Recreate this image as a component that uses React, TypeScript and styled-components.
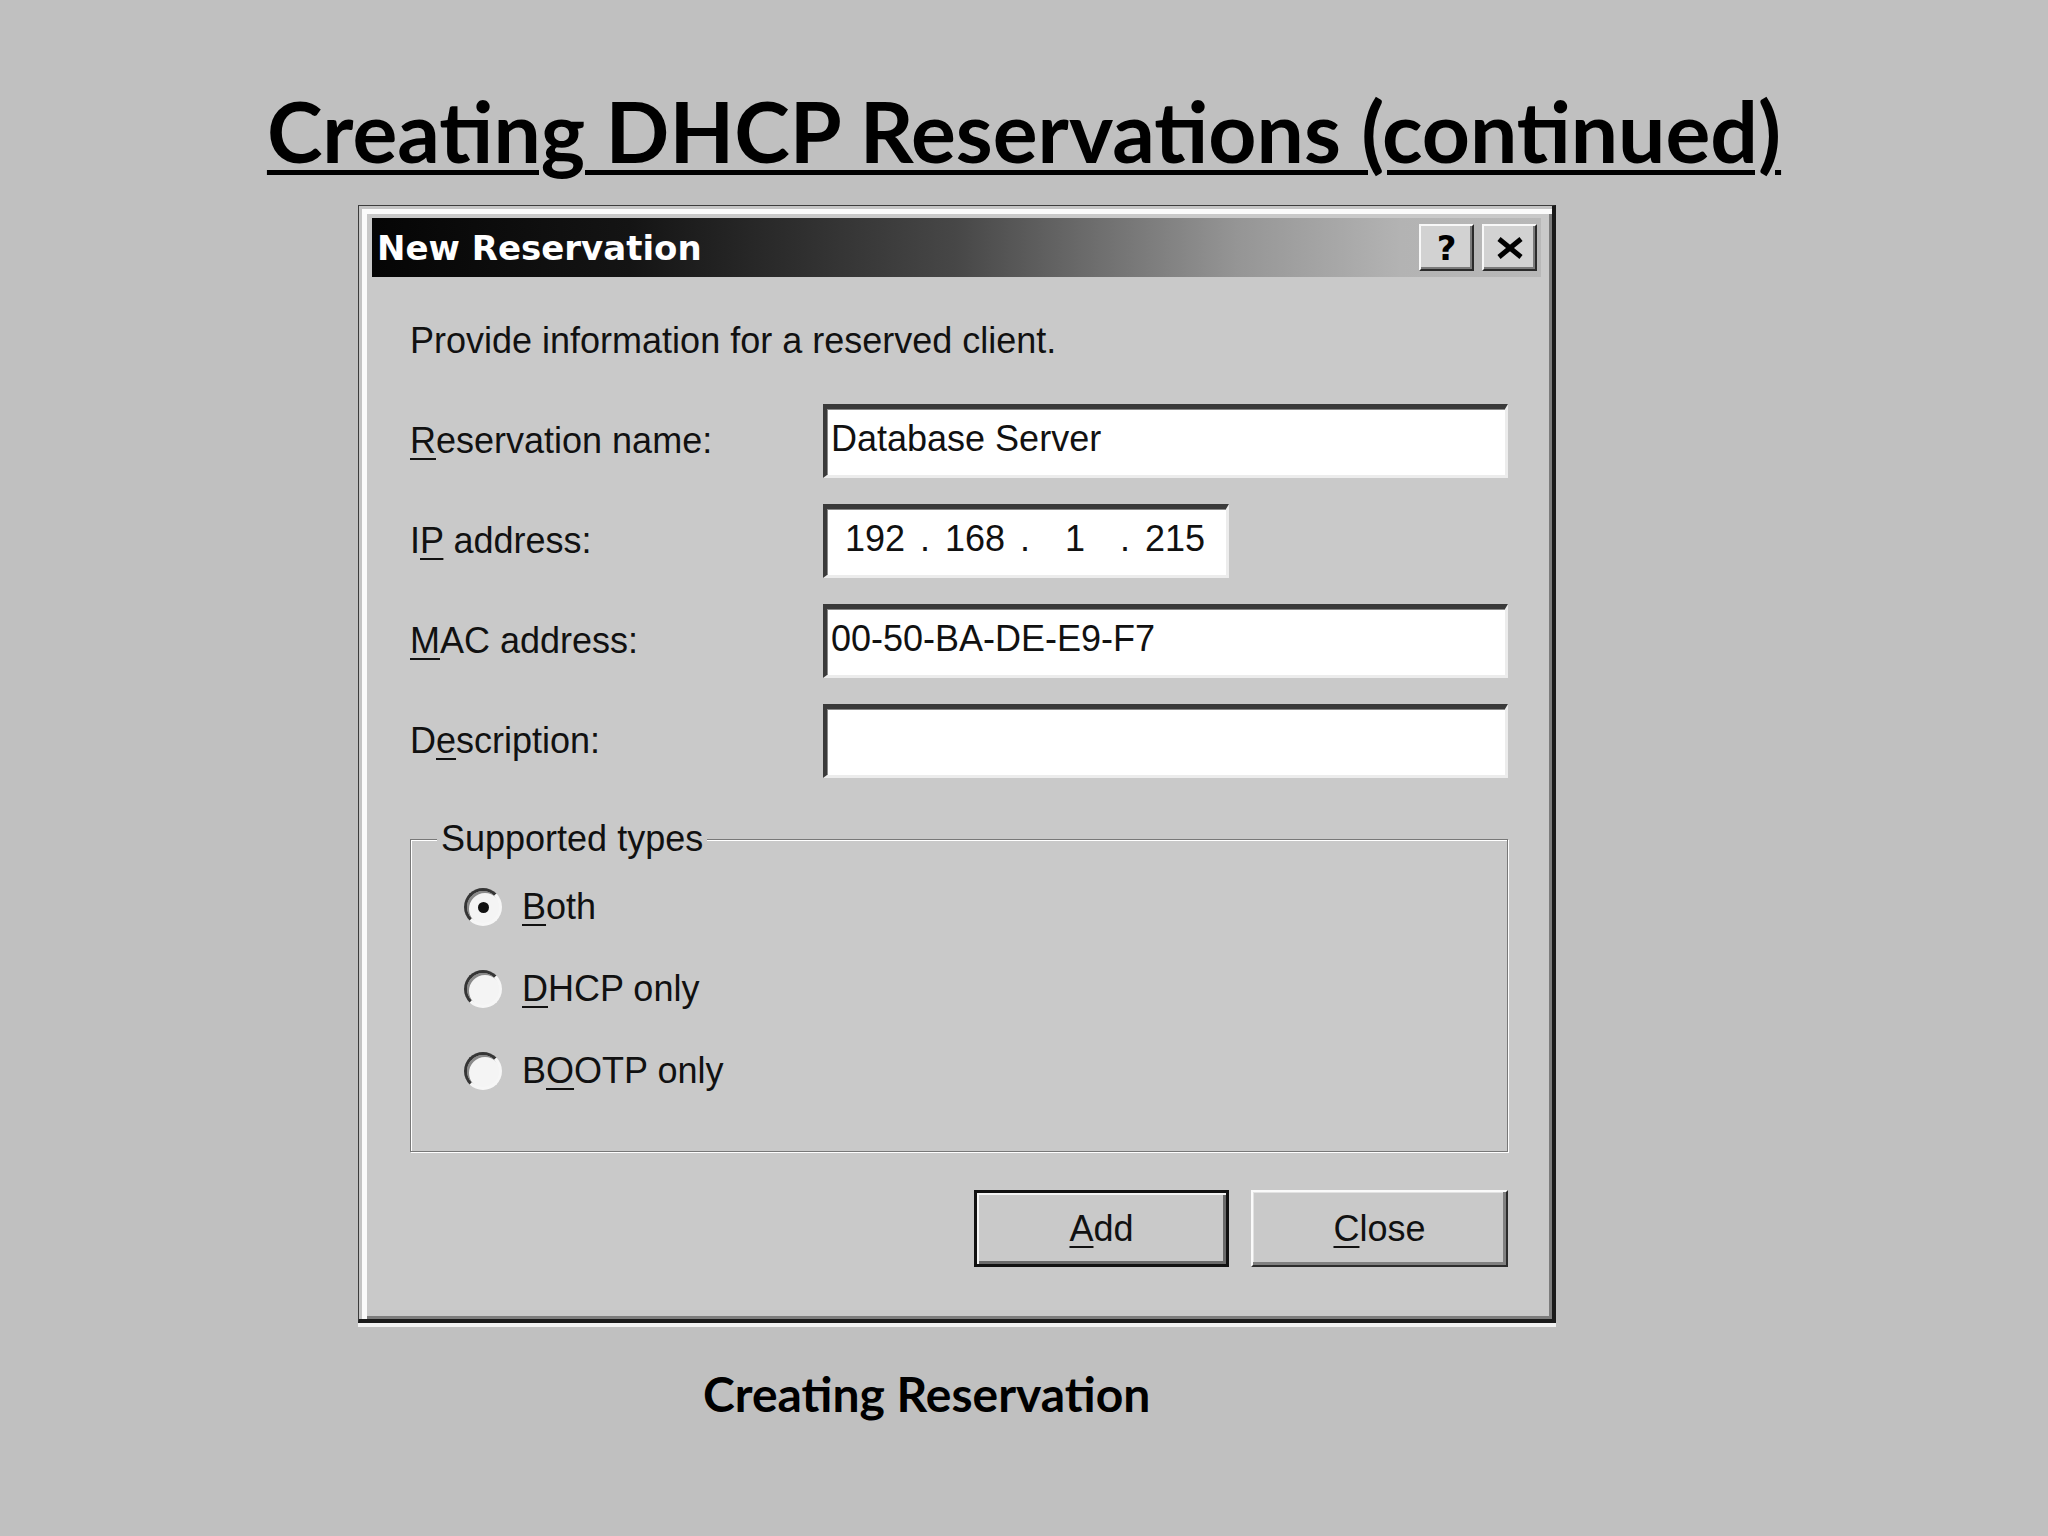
import React from 'react'
import styled, { createGlobalStyle } from 'styled-components'

const GlobalStyle = createGlobalStyle`
  html, body {
    margin: 0;
    padding: 0;
    background: #c0c0c0;
  }
  body {
    width: 2048px;
    height: 1536px;
    overflow: hidden;
  }
`

const Key = ({ children }: { children: React.ReactNode }) => <Mnemonic>{children}</Mnemonic>

const App = () => {
  return (
    <Page>
      <GlobalStyle />
      <SlideTitle>Creating DHCP Reservations (continued)</SlideTitle>

      <Window>
        <TitleBar>
          <WindowTitle>New Reservation</WindowTitle>
          <CaptionButtons>
            <CaptionButton>?</CaptionButton>
            <CaptionButton>
              <svg width="28" height="22" viewBox="0 0 28 22">
                <path d="M3 2 L25 20 M25 2 L3 20" stroke="#000" strokeWidth="5" fill="none" />
              </svg>
            </CaptionButton>
          </CaptionButtons>
        </TitleBar>

        <Body>
          <Intro>Provide information for a reserved client.</Intro>

          <Form>
            <Label>
              <Key>R</Key>eservation name:
            </Label>
            <Field>Database Server</Field>

            <Label>
              I<Key>P</Key> address:
            </Label>
            <Field $width={406}>
              <Octet>192</Octet>
              <Dot>.</Dot>
              <Octet>168</Octet>
              <Dot>.</Dot>
              <Octet>1</Octet>
              <Dot>.</Dot>
              <Octet>215</Octet>
            </Field>

            <Label>
              <Key>M</Key>AC address:
            </Label>
            <Field>00-50-BA-DE-E9-F7</Field>

            <Label>
              D<Key>e</Key>scription:
            </Label>
            <Field />
          </Form>

          <GroupBox>
            <Legend>Supported types</Legend>
            <RadioList>
              <RadioRow>
                <RadioDot $checked />
                <span>
                  <Key>B</Key>oth
                </span>
              </RadioRow>
              <RadioRow>
                <RadioDot />
                <span>
                  <Key>D</Key>HCP only
                </span>
              </RadioRow>
              <RadioRow>
                <RadioDot />
                <span>
                  B<Key>O</Key>OTP only
                </span>
              </RadioRow>
            </RadioList>
          </GroupBox>

          <Buttons>
            <PushButton $default $width={255}>
              <Key>A</Key>dd
            </PushButton>
            <PushButton $width={257}>
              <Key>C</Key>lose
            </PushButton>
          </Buttons>
        </Body>
      </Window>

      <Caption>Creating Reservation</Caption>
    </Page>
  )
}

export default App

const Page = styled.div`
  width: 2048px;
  height: 1536px;
  box-sizing: border-box;
  padding-top: 82px;
  display: flex;
  flex-direction: column;
  align-items: flex-start;
  background: #c0c0c0;
`

const SlideTitle = styled.h1`
  align-self: stretch;
  margin: 0;
  text-align: center;
  font-family: Lato, 'Open Sans', sans-serif;
  font-weight: 700;
  font-size: 84px;
  line-height: 98px;
  color: #000;
  text-decoration: underline;
  text-decoration-thickness: 5px;
  text-underline-offset: 7px;
`

const Window = styled.div`
  margin: 25px 0 0 358px;
  width: 1198px;
  box-sizing: border-box;
  background: #c9c9c9;
  border-style: solid;
  border-width: 1px 4px 4px 1px;
  border-color: #3c3c3c #1a1a1a #1a1a1a #3c3c3c;
  box-shadow: inset 3px 3px 0 #c4c4c4, inset 8px 8px 0 #fbfbfb, inset -3px -3px 0 #7c7c7c,
    0 4px 0 #f2f2f2;
  padding: 12px 11px 52px 13px;
  font-family: 'Liberation Sans', Arial, sans-serif;
  font-size: 36px;
  color: #111;
`

const TitleBar = styled.div`
  height: 59px;
  display: flex;
  align-items: center;
  justify-content: space-between;
  padding: 0 4px 0 5px;
  background: linear-gradient(
    to right,
    #050505 0%,
    #141414 22%,
    #474747 50%,
    #959595 74%,
    #b3b3b3 88%,
    #b8b8b8 100%
  );
`

const WindowTitle = styled.div`
  font-family: 'DejaVu Sans', Verdana, sans-serif;
  font-weight: 700;
  font-size: 34px;
  color: #fff;
`

const CaptionButtons = styled.div`
  display: flex;
  gap: 8px;
`

const CaptionButton = styled.button`
  width: 55px;
  height: 47px;
  padding: 0;
  display: flex;
  align-items: center;
  justify-content: center;
  background: #d2d2d2;
  border-style: solid;
  border-width: 2px;
  border-color: #f8f8f8 #2a2a2a #2a2a2a #f8f8f8;
  box-shadow: inset -2px -2px 0 #7a7a7a;
  font-family: 'DejaVu Sans', Verdana, sans-serif;
  font-weight: 700;
  font-size: 34px;
  line-height: 1;
  color: #000;
`

const Body = styled.div`
  padding: 44px 33px 0 38px;
`

const Intro = styled.div`
  line-height: 40px;
`

const Form = styled.div`
  margin-top: 43px;
  display: grid;
  grid-template-columns: 413px 1fr;
  row-gap: 26px;
  align-items: center;
`

const Label = styled.div`
  line-height: 40px;
`

const Mnemonic = styled.u`
  text-decoration-thickness: 2px;
  text-underline-offset: 5px;
`

const Field = styled.div<{ $width?: number }>`
  width: ${(p) => (p.$width ? `${p.$width}px` : '100%')};
  height: 74px;
  box-sizing: border-box;
  display: flex;
  align-items: center;
  padding: 0 0 6px 4px;
  background: #fff;
  border-style: solid;
  border-width: 5px 3px 3px 4px;
  border-color: #3a3a3a #ececec #ececec #3a3a3a;
  box-shadow: inset 1px 1px 0 #8a8a8a;
  color: #111;
  white-space: nowrap;
`

const Octet = styled.span`
  width: 88px;
  text-align: center;
`

const Dot = styled.span`
  width: 12px;
  text-align: center;
`

const GroupBox = styled.fieldset`
  margin: 41px 0 0;
  padding: 0;
  min-width: 0;
  border: 1px solid #787878;
  box-shadow: inset 1px 1px 0 #fff, 1px 1px 0 #fff;
`

const Legend = styled.legend`
  margin-left: 26px;
  padding: 0 4px;
  line-height: 40px;
  background: #c9c9c9;
`

const RadioList = styled.div`
  padding: 23px 0 55px 53px;
  display: flex;
  flex-direction: column;
  gap: 32px;
`

const RadioRow = styled.div`
  height: 50px;
  display: flex;
  align-items: center;
  gap: 20px;
`

const RadioDot = styled.span<{ $checked?: boolean }>`
  width: 38px;
  height: 38px;
  box-sizing: border-box;
  border-radius: 50%;
  border: 3px solid;
  border-color: #353535 #f6f6f6 #f6f6f6 #353535;
  background: #f4f4f4;
  box-shadow: inset 2px 2px 0 #8a8a8a;
  display: flex;
  align-items: center;
  justify-content: center;

  &::after {
    content: '';
    width: 11px;
    height: 11px;
    border-radius: 50%;
    background: #111;
    display: ${(p) => (p.$checked ? 'block' : 'none')};
  }
`

const Buttons = styled.div`
  margin-top: 38px;
  display: flex;
  justify-content: flex-end;
  gap: 22px;
`

const PushButton = styled.button<{ $default?: boolean; $width: number }>`
  width: ${(p) => p.$width}px;
  height: 77px;
  padding: 0;
  background: #c9c9c9;
  font-family: 'Liberation Sans', Arial, sans-serif;
  font-size: 36px;
  color: #111;
  border-style: solid;
  border-width: ${(p) => (p.$default ? '3px' : '2px')};
  border-color: ${(p) => (p.$default ? '#111' : '#fafafa #2c2c2c #2c2c2c #fafafa')};
  box-shadow: ${(p) =>
    p.$default
      ? 'inset 2px 2px 0 #f4f4f4, inset -3px -3px 0 #6a6a6a'
      : 'inset -3px -3px 0 #808080, inset 1px 1px 0 #e2e2e2'};
`

const Caption = styled.div`
  margin-top: 42px;
  padding-left: 703px;
  font-family: Lato, 'Open Sans', sans-serif;
  font-weight: 700;
  font-size: 48px;
  color: #000;
`
